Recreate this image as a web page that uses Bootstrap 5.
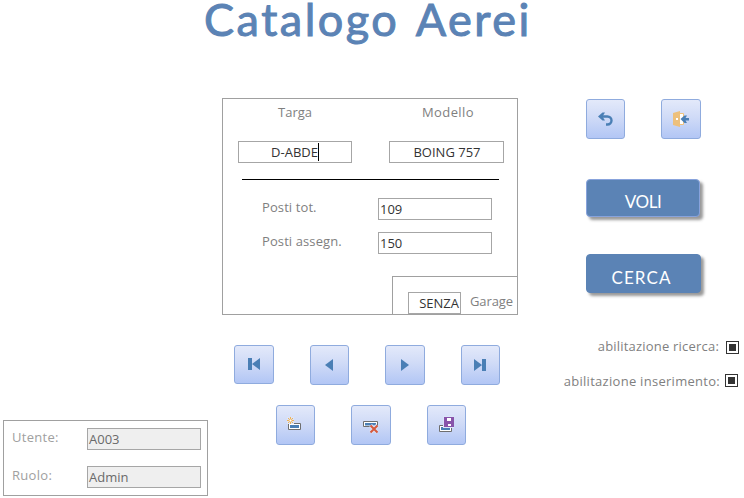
<!DOCTYPE html>
<html lang="it">
<head>
<meta charset="utf-8">
<meta name="viewport" content="width=device-width, initial-scale=1">
<title>Catalogo Aerei</title>
<link href="https://cdn.jsdelivr.net/npm/bootstrap@5.3.0/dist/css/bootstrap.min.css" rel="stylesheet">
<style>
body{font:13px/20px "Open Sans","Noto Sans",sans-serif;color:#7f7f7f;background:#fff}
.page{width:744px;height:498px}
.title{height:98px;padding-left:204px;font:400 45px/39px Lato,sans-serif;color:#5b83b5;letter-spacing:2.5px;word-spacing:4px;-webkit-text-stroke:1px #5b83b5}
.main-area{height:400px}
.side{width:222px;padding:0 0 2px 3px}
.center{width:297px}
.actions{width:225px}
.frame{border:1px solid #a0a0a0}
.user{width:205px;height:76px;padding:7px 6px 0 8px;color:#a0a0a0}
.user .field{background:#efefef;color:#6a6a6a}
.user .entry span{margin-top:-1px;letter-spacing:.3px}
.user .entry+.entry{margin-top:16px}
.sheet{width:296px;height:217px}
.field{width:114px;height:22px;border:1px solid #a6a6a6;background:#fff;color:#333;padding:0 1px;line-height:20px;white-space:nowrap;flex:none}
.heads{height:42px;padding-top:3px}
.heads span:first-child{margin-left:55px;width:111px}
.heads span:last-child{padding-left:33px;letter-spacing:.4px}
.keys{padding-left:15px;gap:37px}
.keys .field:last-child{width:115px;padding-left:2px}
.caret{width:1px;height:18px;background:#000;margin-top:1px}
.rule{height:1px;margin:16px 18px 18px 19px;background:#000}
.seat{padding-left:39px;padding-right:25px}
.seat>span{margin-top:-1px;letter-spacing:.1px}
.seat+.seat{margin-top:12px}
.garage{width:126px;height:39px;margin:22px -1px 0 auto;padding:15px 4px 0 15px}
.garage .field{width:53px;margin-right:9px}
.garage>span{margin-top:-1px;letter-spacing:-.1px}
.sq{width:40px;height:40px;border:1px solid #8fabde;border-radius:3px;background:linear-gradient(#e3e9fa,#d0dbf7 45%,#b2c6f5);padding:0;display:block;flex:none}
.sq svg{display:block;width:100%;height:100%}
.w39{width:39px}.h39{height:39px}
.movers{padding:30px 0 0 12px;gap:36px;height:90px}
.edits{padding-left:54px;gap:36px}
.tools{padding-left:67px;gap:36px;height:81px;padding-top:1px}
.big{width:114px;height:38px;margin-left:67px;padding:6px 0 0;border:1px solid #88a3dc;border-radius:4px;background:#5b83b5;color:#fff;font:17px/32px Lato,sans-serif;box-shadow:3px 3px 3px #999;letter-spacing:-.4px}
.big.find{width:115px;height:39px;margin-top:37px;padding:8px 4px 0 0;line-height:30px;border-color:#5b83b5;letter-spacing:1.1px}
.flag{height:20px;padding-right:5px;gap:7px}
.flag.first{margin-top:43px;letter-spacing:.2px}
.flag.second{margin-top:15px;padding-right:6px;gap:5px;letter-spacing:.28px}
.check{width:13px;height:13px;border:1px solid #333;background:#333;background-clip:content-box;padding:2px;flex:none}
.first .check{margin-top:5px}.second .check{margin-top:3px}
</style>
<script src="https://cdn.jsdelivr.net/npm/bootstrap@5.3.0/dist/js/bootstrap.bundle.min.js"></script>
</head>
<body>
<div class="page">
<h1 class="title m-0 text-nowrap">Catalogo Aerei</h1>
<main class="main-area d-flex">
  <aside class="side d-flex align-items-end">
    <div class="frame user">
      <div class="entry d-flex justify-content-between"><span>Utente:</span><div class="field">A003</div></div>
      <div class="entry d-flex justify-content-between"><span>Ruolo:</span><div class="field">Admin</div></div>
    </div>
  </aside>
  <section class="center">
    <div class="frame sheet">
      <div class="heads d-flex"><span>Targa</span><span>Modello</span></div>
      <div class="keys d-flex"><div class="field d-flex justify-content-center">D-ABDE<span class="caret"></span></div><div class="field text-center">BOING 757</div></div>
      <div class="rule"></div>
      <div class="seat d-flex justify-content-between"><span>Posti tot.</span><div class="field">109</div></div>
      <div class="seat d-flex justify-content-between"><span>Posti assegn.</span><div class="field">150</div></div>
      <div class="frame garage d-flex"><div class="field text-end">SENZA</div><span>Garage</span></div>
    </div>
    <div class="movers d-flex">
      <button class="sq h39" aria-label="Primo"><svg viewBox="0 0 38 37"><path d="M13 12h4v12h-4zM25 12v12l-8-6z" fill="#4a7fb5"/></svg></button>
      <button class="sq w39" aria-label="Precedente"><svg viewBox="0 0 37 38"><path d="M22 13v12l-8-6z" fill="#4a7fb5"/></svg></button>
      <button class="sq" aria-label="Successivo"><svg viewBox="0 0 38 38"><path d="M15 13v12l8-6z" fill="#4a7fb5"/></svg></button>
      <button class="sq w39" aria-label="Ultimo"><svg viewBox="0 0 37 38"><path d="M12 13v12l8-6zM20 13h4v12h-4z" fill="#4a7fb5"/></svg></button>
    </div>
    <div class="edits d-flex">
      <button class="sq w39" aria-label="Nuovo"><svg viewBox="0 0 37 38"><path d="M11.500 17.500h12v6h-12z" fill="#fff" stroke="#6e6e6e"/><path d="M13 19h9v3h-9z" fill="#4a7fb5"/><path d="M10 11h7v7h-7z" fill="#dce5f9"/><g stroke="#edb25a" fill="none"><path d="M13.500 11v7M10 14.500h7M11 12l5 5M16 12l-5 5"/><circle cx="13.500" cy="14.500" r="1.500" fill="#fff"/></g></svg></button>
      <button class="sq" aria-label="Elimina"><svg viewBox="0 0 38 38"><path d="M11.500 15.500h14v5h-14z" fill="#fff" stroke="#6e6e6e"/><path d="M13 17h11v2.500H13z" fill="#4a7fb5"/><path d="M18.500 19.500l7 7M25.500 19.500l-7 7" stroke="#d8dff5" stroke-width="4"/><path d="M18.500 19.500l7 7M25.500 19.500l-7 7" stroke="#d65a3d" stroke-width="2"/></svg></button>
      <button class="sq w39" aria-label="Salva"><svg viewBox="0 0 37 38"><path d="M11.500 19.500h12v6h-12z" fill="#fff" stroke="#6e6e6e"/><path d="M13 21h9v3h-9z" fill="#4a7fb5"/><path d="M15 10h11v12H15z" fill="#dce5f9"/><path d="M16 11h10v10H16z" fill="#8854aa"/><path d="M19 12h4v3h-4zM20 18h3v2h-3z" fill="#fff"/></svg></button>
    </div>
  </section>
  <section class="actions">
    <div class="tools d-flex">
      <button class="sq w39" aria-label="Annulla"><svg viewBox="0 0 37 38"><path d="M13 16.500h7.500a4 4 0 0 1 0 8H19" fill="none" stroke="#4a7fb5" stroke-width="2.400"/><path d="M11 16.500l4.500-4H18l-2.500 4 2.500 4h-2.500z" fill="#4a7fb5"/></svg></button>
      <button class="sq" aria-label="Esci"><svg viewBox="0 0 38 38"><path d="M17 13.500h4.500v11H17" fill="#fff" stroke="#efc27e"/><path d="M11 13l7-2v16l-7-2z" fill="#edc07c"/><path d="M14 18h2v2h-2z" fill="#fff"/><path d="M18.500 19l4-3.500H25L23.500 18H27v2.500h-3.500L25 23h-2.500z" fill="#4a7fb5"/></svg></button>
    </div>
    <button class="big d-block">VOLI</button>
    <button class="big find d-block">CERCA</button>
    <div class="flag first d-flex justify-content-end"><span>abilitazione ricerca:</span><span class="check"></span></div>
    <div class="flag second d-flex justify-content-end"><span>abilitazione inserimento:</span><span class="check"></span></div>
  </section>
</main>
</div>
</body>
</html>
